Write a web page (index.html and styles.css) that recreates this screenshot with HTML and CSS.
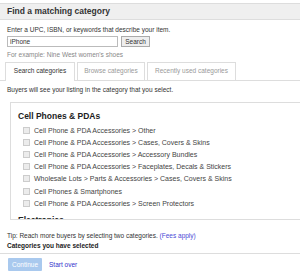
FILE: index.html
```html
<!DOCTYPE html>
<html lang="en">
<head>
  <meta charset="UTF-8">
  <title>Find a matching category</title>
  <link rel="stylesheet" href="styles.css">
</head>
<body>

<div class="panel">
  <h2 class="title">Find a matching category</h2>

  <div class="search-area">
    <p class="hint">Enter a UPC, ISBN, or keywords that describe your item.</p>
    <div class="search-row">
      <input type="text" class="search-input" value="iPhone">
      <button class="search-btn">Search</button>
    </div>
    <p class="example">For example: Nine West women's shoes</p>
  </div>

  <div class="tabs">
    <span class="tab active">Search categories</span>
    <span class="tab">Browse categories</span>
    <span class="tab">Recently used categories</span>
  </div>

  <p class="note">Buyers will see your listing in the category that you select.</p>

  <div class="results">
    <h3>Cell Phones &amp; PDAs</h3>
    <ul class="cat-list">
      <li><span class="box"></span>Cell Phone &amp; PDA Accessories &gt; Other</li>
      <li><span class="box"></span>Cell Phone &amp; PDA Accessories &gt; Cases, Covers &amp; Skins</li>
      <li><span class="box"></span>Cell Phone &amp; PDA Accessories &gt; Accessory Bundles</li>
      <li><span class="box"></span>Cell Phone &amp; PDA Accessories &gt; Faceplates, Decals &amp; Stickers</li>
      <li><span class="box"></span>Wholesale Lots &gt; Parts &amp; Accessories &gt; Cases, Covers &amp; Skins</li>
      <li><span class="box"></span>Cell Phones &amp; Smartphones</li>
      <li><span class="box"></span>Cell Phone &amp; PDA Accessories &gt; Screen Protectors</li>
    </ul>
    <h3>Electronics</h3>
  </div>

  <p class="tip">Tip: Reach more buyers by selecting two categories. <a href="#">(Fees apply)</a></p>
  <p class="selected">Categories you have selected</p>

  <div class="actions">
    <button class="continue-btn">Continue</button>
    <a href="#" class="start-over">Start over</a>
  </div>
</div>

</body>
</html>
```

FILE: styles.css
```css
* {
  margin: 0;
  padding: 0;
  box-sizing: border-box;
  font-family: 'Liberation Sans', Arial, sans-serif;
}

body {
  background-color: #fff;
  overflow: hidden;
}

.panel {
  width: 100%;
  padding-top: 3px;
}

.title {
  height: 17px;
  line-height: 15px;
  padding-left: 7px;
  font-size: 8.5px;
  color: #333;
  background-color: #efefef;
  border-top: 1px solid #ddd;
  border-bottom: 1px solid #ddd;
}

.search-area {
  padding: 0 7px;
}

.hint {
  margin-top: 5px;
  font-size: 6.5px;
  line-height: 9px;
  color: #333;
}

.search-row {
  display: flex;
  gap: 3px;
  margin-top: 2px;
}

.search-input {
  width: 111px;
  height: 11px;
  border: 1px solid #bbb;
  padding: 0 2px;
  font-size: 6.5px;
  color: #333;
}

.search-btn {
  width: 29px;
  height: 11px;
  border: 1px solid #aaa;
  background-color: #eee;
  font-size: 6.5px;
  color: #333;
}

.example {
  margin-top: 3px;
  font-size: 6.5px;
  line-height: 9px;
  color: #888;
}

.tabs {
  display: flex;
  gap: 2px;
  margin-top: 3px;
  padding-left: 5px;
  border-bottom: 1px solid #ddd;
}

.tab {
  height: 18px;
  line-height: 16px;
  text-align: center;
  font-size: 6.5px;
  color: #999;
  border: 1px solid #ddd;
  border-bottom: none;
  background-color: #fff;
}

.tab.active {
  width: 70px;
  height: 19px;
  margin-bottom: -1px;
  color: #333;
}

.tab:nth-child(2) {
  width: 68px;
}

.tab:nth-child(3) {
  width: 89px;
}

.note {
  margin-top: 4px;
  padding-left: 7px;
  font-size: 6.5px;
  line-height: 9px;
  color: #333;
}

.results {
  margin: 8px 0 0 10px;
  height: 118px;
  overflow: hidden;
  border: 1px solid #ddd;
  border-right: none;
  padding: 8px 0 0 7px;
}

.results h3 {
  font-size: 8.5px;
  line-height: 10px;
  color: #222;
}

.cat-list {
  list-style: none;
  margin-top: 3px;
  margin-bottom: 6px;
}

.cat-list li {
  display: flex;
  align-items: center;
  height: 12.2px;
  padding-left: 5px;
  font-size: 7px;
  color: #444;
}

.box {
  width: 7px;
  height: 7px;
  margin-right: 4px;
  border: 1px solid #ccc;
  background-color: #ececec;
}

.tip {
  margin-top: 11px;
  padding-left: 7px;
  font-size: 6.5px;
  line-height: 9px;
  color: #333;
}

.tip a {
  color: #4a4ad6;
  text-decoration: none;
}

.selected {
  margin-top: 1px;
  padding-left: 7px;
  font-size: 6.5px;
  line-height: 9px;
  font-weight: bold;
  color: #222;
}

.actions {
  display: flex;
  align-items: center;
  gap: 7px;
  margin-top: 3px;
  padding: 4px 8px;
  border-top: 1px solid #ddd;
}

.continue-btn {
  width: 34px;
  height: 13px;
  border: none;
  border-radius: 1px;
  background-color: #a9c9ee;
  color: #fff;
  font-size: 6.5px;
}

.start-over {
  font-size: 6.5px;
  color: #3333cc;
  text-decoration: none;
}
```
